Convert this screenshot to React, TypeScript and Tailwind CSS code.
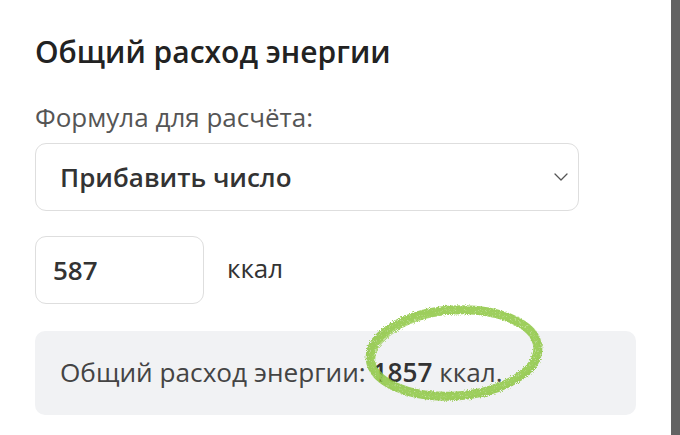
import React from "react";

export default function App() {
  return (
    <div className="flex h-[435px] w-[680px] overflow-hidden bg-white" style={{ fontFamily: '"Open Sans", "Noto Sans", sans-serif' }}>
      <div className="relative flex-1 pl-[35px] pr-[35px] pt-[31px]">
        <h1 className="text-[30px] font-semibold leading-[42px] text-[#222]">Общий расход энергии</h1>
        <div className="mt-[27px] text-[26px] leading-[34px] text-[#555]">Формула для расчёта:</div>
        <div className="mt-[9px] flex h-[68px] w-[544px] items-center justify-between rounded-[11px] border border-[#dedede] bg-white pl-[24px] pr-[10px]">
          <span className="text-[26px] font-semibold text-[#333]">Прибавить число</span>
          <svg width="14" height="8" viewBox="0 0 14 8" fill="none">
            <path d="M1 1l6 6 6-6" stroke="#555" strokeWidth="1.3" strokeLinecap="round" strokeLinejoin="round" />
          </svg>
        </div>
        <div className="mt-[25px] flex items-center gap-[23px]">
          <div className="flex h-[68px] w-[169px] items-center rounded-[11px] border border-[#dedede] bg-white pl-[17px]">
            <span className="text-[26px] font-semibold text-[#333]">587</span>
          </div>
          <span className="mb-[4px] text-[26px] text-[#333]">ккал</span>
        </div>
        <div className="mt-[27px] flex h-[84px] w-[601px] items-center rounded-[10px] bg-[#f1f2f4] pl-[25px]">
          <span className="text-[26.2px] text-[#444]">
            Общий расход энергии: <span className="font-semibold text-[#333]">1857</span> ккал.
          </span>
        </div>
        <svg className="pointer-events-none absolute left-[358px] top-[299px]" width="200" height="110" viewBox="0 0 200 110">
          <defs>
            <filter id="pencil" x="-10%" y="-10%" width="120%" height="120%">
              <feTurbulence type="fractalNoise" baseFrequency="1.2" numOctaves="2" seed="3" result="noise" />
              <feDisplacementMap in="SourceGraphic" in2="noise" scale="4" result="disp" />
              <feTurbulence type="fractalNoise" baseFrequency="2.2" numOctaves="1" seed="7" result="grain" />
              <feColorMatrix in="grain" type="matrix" values="0 0 0 0 0  0 0 0 0 0  0 0 0 0 0  0 0 0 -2.2 2.3" result="grainA" />
              <feComposite in="disp" in2="grainA" operator="in" />
            </filter>
          </defs>
          <g filter="url(#pencil)">
            <ellipse cx="96" cy="54" rx="84" ry="43" transform="rotate(-4 96 54)" fill="none" stroke="#8cc63f" strokeWidth="9" opacity="0.85" />
            <ellipse cx="97" cy="55" rx="82" ry="42" transform="rotate(-6 97 55)" fill="none" stroke="#9fd05e" strokeWidth="4" opacity="0.7" />
          </g>
        </svg>
      </div>
      <div className="h-full w-[9px] bg-[#636363]" />
    </div>
  );
}
